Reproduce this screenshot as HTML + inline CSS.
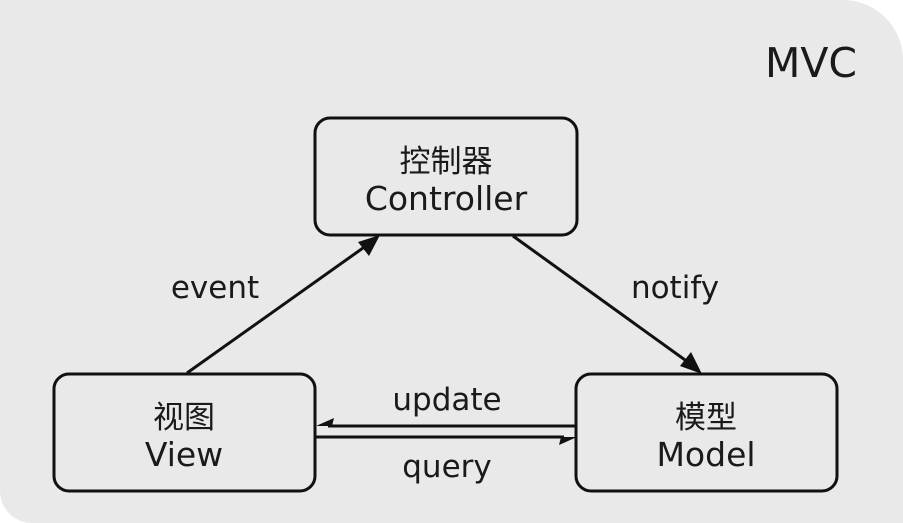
<!DOCTYPE html>
<html><head><meta charset="utf-8"><style>
html,body{margin:0;padding:0;background:#fff;width:903px;height:523px;overflow:hidden}
svg{display:block}
text{font-family:"DejaVu Sans","Noto Sans CJK SC",sans-serif;fill:#1a1a1a}
</style></head><body>
<svg width="903" height="523" viewBox="0 0 903 523">
<path d="M0 0 H843 A60 60 0 0 1 903 60 V523 H32 A32 32 0 0 1 0 491Z" fill="#e9e9e9"/>
<text x="811" y="77" font-size="41" text-anchor="middle">MVC</text>
<g fill="none" stroke="#111" stroke-width="3">
<rect x="315" y="118" width="262" height="117" rx="15"/>
<rect x="54" y="374" width="261" height="117" rx="15"/>
<rect x="576" y="374" width="261" height="117" rx="15"/>
<line x1="187" y1="373" x2="370" y2="243"/>
<line x1="513" y1="236" x2="692" y2="365"/>
<line x1="576" y1="426" x2="328" y2="426"/>
<line x1="316" y1="437" x2="564" y2="437"/>
</g>
<g fill="#111">
<path d="M380 235 L358 242 L369 256Z"/>
<path d="M702 374 L680 366 L691 352Z"/>
<path d="M316 426 L334 418 L332 426Z"/>
<path d="M577 437 L559 445 L561 437Z"/>
</g>
<text x="446" y="172" font-size="31" text-anchor="middle">控制器</text>
<text x="446" y="210" font-size="33" text-anchor="middle">Controller</text>
<text x="184" y="428" font-size="31" text-anchor="middle">视图</text>
<text x="184" y="466" font-size="33" text-anchor="middle">View</text>
<text x="706" y="428" font-size="31" text-anchor="middle">模型</text>
<text x="706" y="466" font-size="33" text-anchor="middle">Model</text>
<text x="215" y="298" font-size="31" text-anchor="middle">event</text>
<text x="675" y="298" font-size="31" text-anchor="middle">notify</text>
<text x="447" y="410" font-size="31" text-anchor="middle">update</text>
<text x="447" y="477" font-size="31" text-anchor="middle">query</text>
</svg>
</body></html>
